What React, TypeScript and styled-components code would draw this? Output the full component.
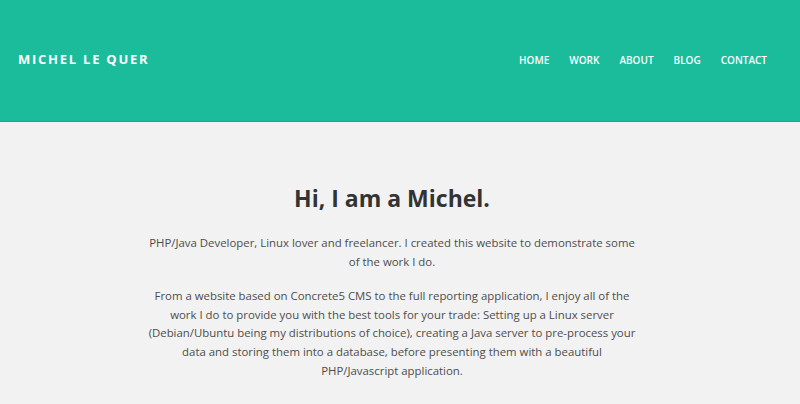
import React from "react";
import styled, { createGlobalStyle } from "styled-components";

const Global = createGlobalStyle`
  html, body { margin: 0; padding: 0; background: #f2f2f2; }
  * { box-sizing: border-box; }
`;

const Header = styled.header`
  height: 122px;
  background: #1abc9c;
  display: flex;
  align-items: center;
  justify-content: space-between;
  padding: 0 33px 0 18px;
  border-bottom: 1px solid #17a88b;
`;

const Brand = styled.a`
  font-family: "Open Sans", sans-serif;
  font-weight: 700;
  font-size: 13px;
  letter-spacing: 1.75px;
  color: #fff;
  text-transform: uppercase;
  text-decoration: none;
  margin-top: -4px;
`;

const Nav = styled.nav`
  display: flex;
  gap: 20px;
  margin-top: -1px;
`;

const NavLink = styled.a`
  font-family: "Open Sans", sans-serif;
  font-weight: 600;
  font-size: 10px;
  letter-spacing: 0;
  color: #fff;
  text-transform: uppercase;
  text-decoration: none;
`;

const Main = styled.main`
  display: flex;
  flex-direction: column;
  align-items: center;
  padding: 60px 16px 0 0;
`;

const Title = styled.h1`
  font-family: "Open Sans", sans-serif;
  font-weight: 700;
  font-size: 23px;
  color: #333;
  margin: 0 0 20px;
`;

const Text = styled.p`
  font-family: "Open Sans", sans-serif;
  font-size: 11.4px;
  line-height: 18.6px;
  color: #4d4d4d;
  text-align: center;
  width: 492px;
  margin: 0 0 16px;
`;

export default function App() {
  return (
    <>
      <Global />
      <Header>
        <Brand href="#">Michel Le Quer</Brand>
        <Nav>
          <NavLink href="#">Home</NavLink>
          <NavLink href="#">Work</NavLink>
          <NavLink href="#">About</NavLink>
          <NavLink href="#">Blog</NavLink>
          <NavLink href="#">Contact</NavLink>
        </Nav>
      </Header>
      <Main>
        <Title>Hi, I am a Michel.</Title>
        <Text>
          PHP/Java Developer, Linux lover and freelancer. I created this website to demonstrate some of the work I do.
        </Text>
        <Text>
          From a website based on Concrete5 CMS to the full reporting application, I enjoy all of the work I do to provide you with the best tools for your trade: Setting up a Linux server (Debian/Ubuntu being my distributions of choice), creating a Java server to pre-process your data and storing them into a database, before presenting them with a beautiful PHP/Javascript application.
        </Text>
      </Main>
    </>
  );
}
